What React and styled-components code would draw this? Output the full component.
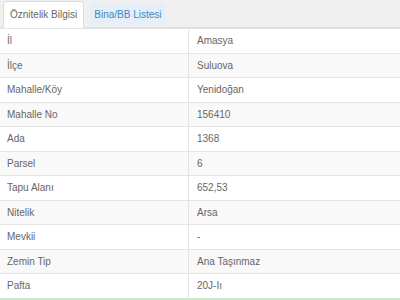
import React from 'react';
import styled, { createGlobalStyle } from 'styled-components';

const GlobalStyle = createGlobalStyle`
  html, body {
    margin: 0;
    padding: 0;
    background: #fff;
    font-family: "Liberation Sans", Arial, sans-serif;
  }
`;

const Panel = styled.div`
  width: 400px;
  height: 300px;
  overflow: hidden;
  display: flex;
  flex-direction: column;
  border-bottom: 2px solid #c8ebc8;
  box-sizing: border-box;
`;

const TabBar = styled.div`
  display: flex;
  align-items: flex-end;
  gap: 6px;
  height: 28px;
  padding: 0 0 0 3px;
  background: #f0f0f0;
  border-bottom: 1px solid #ddd;
  box-sizing: border-box;
`;

const Tab = styled.div`
  display: flex;
  align-items: center;
  height: ${p => (p.active ? '27px' : '22px')};
  margin-bottom: ${p => (p.active ? '-1px' : '2px')};
  padding: 0 ${p => (p.active ? '6px' : '4px')};
  font-size: 10px;
  color: ${p => (p.active ? '#666' : '#3f86c4')};
  background: ${p => (p.active ? '#fff' : '#e6eef7')};
  border: ${p => (p.active ? '1px solid #ddd' : 'none')};
  border-bottom-color: #fff;
  border-radius: 3px 3px 0 0;
  box-sizing: border-box;
`;

const Table = styled.div`
  display: grid;
  grid-template-columns: 188px 1fr;
`;

const Cell = styled.div`
  height: 24.5px;
  display: flex;
  align-items: center;
  padding-left: ${p => (p.right ? '8px' : '7px')};
  font-size: 10px;
  color: #666;
  background: ${p => (p.striped ? '#f9f9f9' : '#fff')};
  border-top: 1px solid #e4e4e4;
  border-left: ${p => (p.right ? '1px solid #e4e4e4' : 'none')};
  box-sizing: border-box;
`;

const rows = [
  ['İl', 'Amasya'],
  ['İlçe', 'Suluova'],
  ['Mahalle/Köy', 'Yenidoğan'],
  ['Mahalle No', '156410'],
  ['Ada', '1368'],
  ['Parsel', '6'],
  ['Tapu Alanı', '652,53'],
  ['Nitelik', 'Arsa'],
  ['Mevkii', '-'],
  ['Zemin Tip', 'Ana Taşınmaz'],
  ['Pafta', '20J-Iı'],
];

export default function App() {
  return (
    <>
      <GlobalStyle />
      <Panel>
        <TabBar>
          <Tab active>Öznitelik Bilgisi</Tab>
          <Tab>Bina/BB Listesi</Tab>
        </TabBar>
        <Table>
          {rows.map(([label, value], i) => (
            <React.Fragment key={label}>
              <Cell striped={i % 2 === 1}>{label}</Cell>
              <Cell right striped={i % 2 === 1}>{value}</Cell>
            </React.Fragment>
          ))}
        </Table>
      </Panel>
    </>
  );
}
